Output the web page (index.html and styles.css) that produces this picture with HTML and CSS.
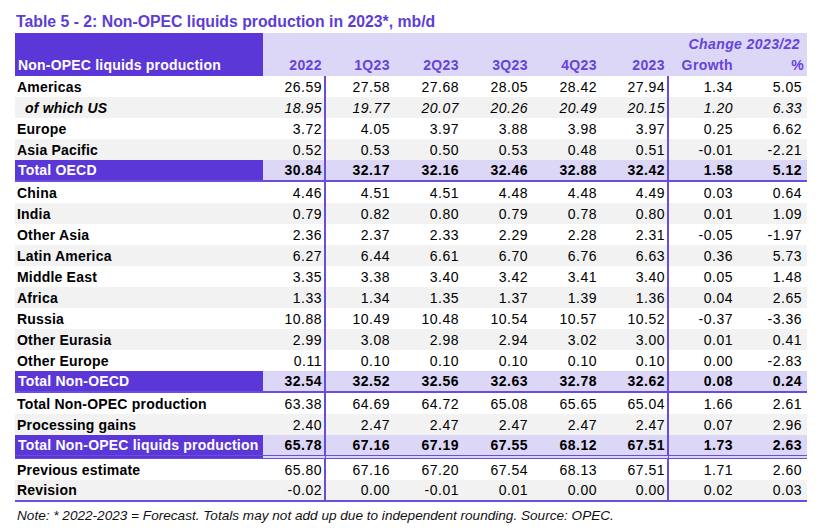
FILE: index.html
```html
<!DOCTYPE html>
<html>
<head>
<meta charset="utf-8">
<link rel="stylesheet" href="styles.css">
</head>
<body>
<div class="page">
  <h1 class="title">Table 5 - 2: Non-OPEC liquids production in 2023*, mb/d</h1>
  <table class="tbl">
    <colgroup>
      <col class="w-label"><col class="w-a"><col class="w-b"><col class="w-c"><col class="w-c"><col class="w-c"><col class="w-b"><col class="w-b"><col class="w-d">
    </colgroup>
    <thead>
      <tr class="h1">
        <th class="hlabel" rowspan="2">Non-OPEC liquids production</th>
        <th class="hcell"></th><th class="hcell"></th><th class="hcell"></th><th class="hcell"></th><th class="hcell"></th><th class="hcell"></th>
        <th class="hcell change" colspan="2">Change 2023/22</th>
      </tr>
      <tr class="h2">
        <th class="hcell">2022</th><th class="hcell">1Q23</th><th class="hcell">2Q23</th><th class="hcell">3Q23</th><th class="hcell">4Q23</th><th class="hcell">2023</th><th class="hcell">Growth</th><th class="hcell pct">%</th>
      </tr>
    </thead>
    <tbody>
      <tr><td class="lab">Americas</td><td class="v">26.59</td><td>27.58</td><td>27.68</td><td>28.05</td><td>28.42</td><td class="v">27.94</td><td>1.34</td><td class="pct">5.05</td></tr>
      <tr class="alt it"><td class="lab sub">of which US</td><td class="v">18.95</td><td>19.77</td><td>20.07</td><td>20.26</td><td>20.49</td><td class="v">20.15</td><td>1.20</td><td class="pct">6.33</td></tr>
      <tr><td class="lab">Europe</td><td class="v">3.72</td><td>4.05</td><td>3.97</td><td>3.88</td><td>3.98</td><td class="v">3.97</td><td>0.25</td><td class="pct">6.62</td></tr>
      <tr class="alt"><td class="lab">Asia Pacific</td><td class="v">0.52</td><td>0.53</td><td>0.50</td><td>0.53</td><td>0.48</td><td class="v">0.51</td><td>-0.01</td><td class="pct">-2.21</td></tr>
      <tr class="total"><td class="lab">Total OECD</td><td class="v">30.84</td><td>32.17</td><td>32.16</td><td>32.46</td><td>32.88</td><td class="v">32.42</td><td>1.58</td><td class="pct">5.12</td></tr>
      <tr><td class="lab">China</td><td class="v">4.46</td><td>4.51</td><td>4.51</td><td>4.48</td><td>4.48</td><td class="v">4.49</td><td>0.03</td><td class="pct">0.64</td></tr>
      <tr class="alt"><td class="lab">India</td><td class="v">0.79</td><td>0.82</td><td>0.80</td><td>0.79</td><td>0.78</td><td class="v">0.80</td><td>0.01</td><td class="pct">1.09</td></tr>
      <tr><td class="lab">Other Asia</td><td class="v">2.36</td><td>2.37</td><td>2.33</td><td>2.29</td><td>2.28</td><td class="v">2.31</td><td>-0.05</td><td class="pct">-1.97</td></tr>
      <tr class="alt"><td class="lab">Latin America</td><td class="v">6.27</td><td>6.44</td><td>6.61</td><td>6.70</td><td>6.76</td><td class="v">6.63</td><td>0.36</td><td class="pct">5.73</td></tr>
      <tr><td class="lab">Middle East</td><td class="v">3.35</td><td>3.38</td><td>3.40</td><td>3.42</td><td>3.41</td><td class="v">3.40</td><td>0.05</td><td class="pct">1.48</td></tr>
      <tr class="alt"><td class="lab">Africa</td><td class="v">1.33</td><td>1.34</td><td>1.35</td><td>1.37</td><td>1.39</td><td class="v">1.36</td><td>0.04</td><td class="pct">2.65</td></tr>
      <tr><td class="lab">Russia</td><td class="v">10.88</td><td>10.49</td><td>10.48</td><td>10.54</td><td>10.57</td><td class="v">10.52</td><td>-0.37</td><td class="pct">-3.36</td></tr>
      <tr class="alt"><td class="lab">Other Eurasia</td><td class="v">2.99</td><td>3.08</td><td>2.98</td><td>2.94</td><td>3.02</td><td class="v">3.00</td><td>0.01</td><td class="pct">0.41</td></tr>
      <tr><td class="lab">Other Europe</td><td class="v">0.11</td><td>0.10</td><td>0.10</td><td>0.10</td><td>0.10</td><td class="v">0.10</td><td>0.00</td><td class="pct">-2.83</td></tr>
      <tr class="total"><td class="lab">Total Non-OECD</td><td class="v">32.54</td><td>32.52</td><td>32.56</td><td>32.63</td><td>32.78</td><td class="v">32.62</td><td>0.08</td><td class="pct">0.24</td></tr>
      <tr><td class="lab">Total Non-OPEC production</td><td class="v">63.38</td><td>64.69</td><td>64.72</td><td>65.08</td><td>65.65</td><td class="v">65.04</td><td>1.66</td><td class="pct">2.61</td></tr>
      <tr class="alt"><td class="lab">Processing gains</td><td class="v">2.40</td><td>2.47</td><td>2.47</td><td>2.47</td><td>2.47</td><td class="v">2.47</td><td>0.07</td><td class="pct">2.96</td></tr>
      <tr class="total grand"><td class="lab">Total Non-OPEC liquids production</td><td class="v">65.78</td><td>67.16</td><td>67.19</td><td>67.55</td><td>68.12</td><td class="v">67.51</td><td>1.73</td><td class="pct">2.63</td></tr>
      <tr><td class="lab">Previous estimate</td><td class="v">65.80</td><td>67.16</td><td>67.20</td><td>67.54</td><td>68.13</td><td class="v">67.51</td><td>1.71</td><td class="pct">2.60</td></tr>
      <tr class="alt last"><td class="lab">Revision</td><td class="v">-0.02</td><td>0.00</td><td>-0.01</td><td>0.01</td><td>0.00</td><td class="v">0.00</td><td>0.02</td><td class="pct">0.03</td></tr>
    </tbody>
  </table>
  <p class="note">Note: * 2022-2023 = Forecast. Totals may not add up due to independent rounding. Source: OPEC.</p>
</div>
</body>
</html>
```

FILE: styles.css
```css
html, body {
  margin: 0;
  padding: 0;
  background: #ffffff;
}

.page {
  padding: 13px 0 0 15px;
  font-family: "Liberation Sans", Arial, sans-serif;
  color: #000;
}

.title {
  margin: 0 0 2px 1px;
  font-size: 15.8px;
  line-height: 18px;
  font-weight: bold;
  color: #5d3dd6;
  white-space: nowrap;
}

.tbl {
  border-collapse: separate;
  border-spacing: 0;
  table-layout: fixed;
  width: 792px;
  font-size: 14px;
}

.w-label { width: 248px; }
.w-a { width: 63px; }
.w-b { width: 68px; }
.w-c { width: 69px; }
.w-d { width: 70px; }

.tbl th, .tbl td {
  padding: 0 4px 0 0;
  white-space: nowrap;
  overflow: hidden;
}

.h1 th { height: 21px; }
.h2 th { height: 22px; }

.hlabel {
  background: #5b37d8;
  color: #fff;
  text-align: left;
  vertical-align: bottom;
  font-weight: bold;
  padding: 0 0 3px 3px !important;
  line-height: 16px;
  letter-spacing: 0.2px;
}

.hcell {
  background: #dcd6f7;
  color: #6544d8;
  font-weight: bold;
  text-align: right;
  letter-spacing: 0.4px;
}

.h2 .hcell { vertical-align: middle; }

.change {
  font-style: italic;
  padding-right: 7px !important;
}

.hcell.pct { padding-right: 3px; }

.tbl td {
  height: 21px;
  text-align: right;
  vertical-align: middle;
  line-height: 16px;
  letter-spacing: 0.5px;
}

.tbl td.lab {
  text-align: left;
  font-weight: bold;
  padding-left: 2px;
  letter-spacing: 0.2px;
}

.tbl td.sub {
  padding-left: 10px;
}

.tbl td.v {
  border-right: 2px solid #6a4ddb;
  padding-right: 2px;
}

.tbl td.pct { padding-right: 5px; }

.alt td { background: #f2f2f2; }

.it td { font-style: italic; }

.total td {
  background: #dcd6f7;
  font-weight: bold;
  height: 20px;
  border-bottom: 2px solid #6a4ddb;
}

.total td.lab {
  background: #5b37d8;
  color: #fff;
  padding-left: 3px;
}

.grand td {
  height: 20px;
  border-bottom: 4px double #6a4ddb;
}

.last td {
  height: 20px;
  border-bottom: 2px solid #6a4ddb;
}

.note {
  margin: 6px 0 0 2px;
  font-size: 13.6px;
  font-style: italic;
  line-height: 16px;
  color: #111;
}
```
